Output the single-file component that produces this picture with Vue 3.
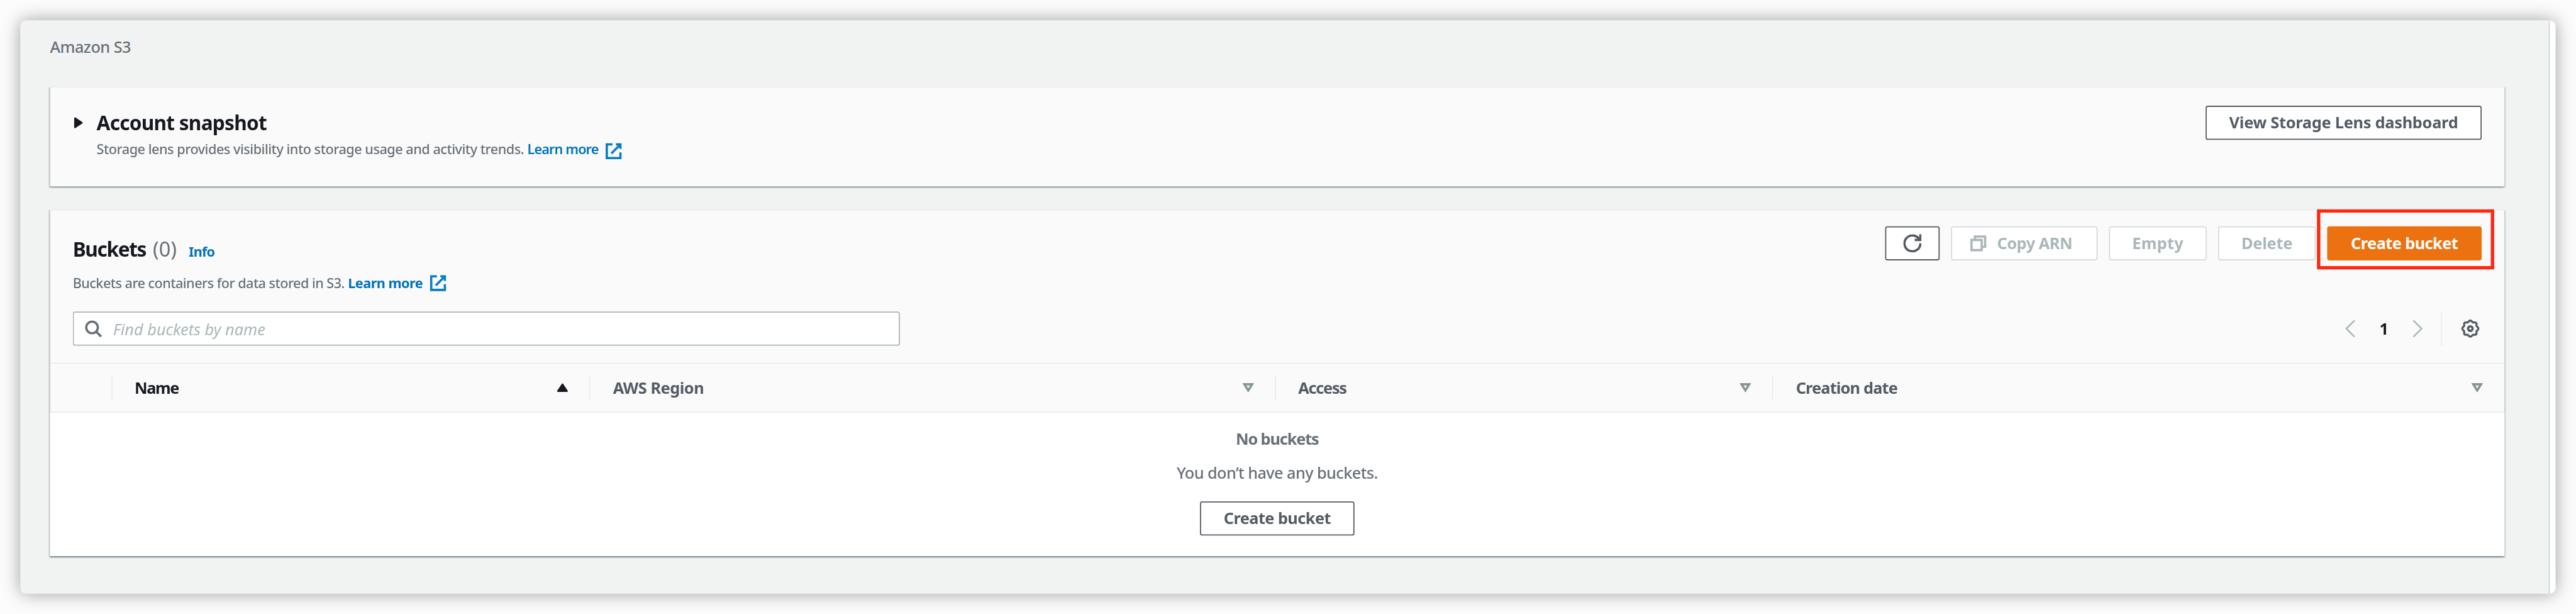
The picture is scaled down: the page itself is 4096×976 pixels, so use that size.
<script setup>
const columns = [
  { key: 'name', label: 'Name', sorted: true },
  { key: 'region', label: 'AWS Region', sorted: false },
  { key: 'access', label: 'Access', sorted: false },
  { key: 'created', label: 'Creation date', sorted: false },
]

// Eight-lobed outline of the settings gear
const gearPoints = Array.from({ length: 96 }, (_, i) => {
  const a = (i / 96) * Math.PI * 2
  const r = 6.55 + 0.6 * Math.cos(8 * a)
  return `${(8 + r * Math.cos(a)).toFixed(2)},${(8 + r * Math.sin(a)).toFixed(2)}`
}).join(' ')
</script>

<template>
  <div class="viewport">
    <div class="canvas">
      <div class="window">
        <main class="page">
          <nav class="crumbs">Amazon S3</nav>

          <section class="card snapshot">
            <svg class="caret" viewBox="0 0 16 20"><path d="M2 2v16L14 10z" /></svg>
            <div class="snapshot-text">
              <h2 class="title account">Account snapshot</h2>
              <p class="desc lens">
                <span>Storage lens provides visibility into storage usage and activity trends.</span>
                <a class="link light">Learn more</a>
                <svg class="icon ext" viewBox="0 0 16 16"><path d="M10 2h4v4M6 10l8-8M14 9v5H2V2h5" /></svg>
              </p>
            </div>
            <button class="btn dashboard">View Storage Lens dashboard</button>
          </section>

          <section class="card buckets">
            <header class="head">
              <div class="head-text">
                <div class="title-row">
                  <h2 class="title buckets-title">Buckets</h2>
                  <span class="count">(0)</span>
                  <a class="info">Info</a>
                </div>
                <p class="desc stored">
                  <span>Buckets are containers for data stored in S3.</span>
                  <a class="link">Learn more</a>
                  <svg class="icon ext" viewBox="0 0 16 16"><path d="M10 2h4v4M6 10l8-8M14 9v5H2V2h5" /></svg>
                </p>
              </div>
              <div class="actions">
                <button class="btn refresh">
                  <svg class="icon" viewBox="0 0 16 16"><path d="M10 5h5V0M15 8a7 7 0 1 1-.7-3" /></svg>
                </button>
                <button class="btn off copy">
                  <svg class="icon" viewBox="0 0 16 16"><path d="M2 5h9v9H2zM5 5V2h9v9h-3" /></svg>
                  <span>Copy ARN</span>
                </button>
                <button class="btn off empty-btn">Empty</button>
                <button class="btn off delete">Delete</button>
                <div class="marked">
                  <button class="btn primary create">Create bucket</button>
                </div>
              </div>
            </header>

            <div class="toolbar">
              <div class="search">
                <svg class="icon" viewBox="0 0 16 16"><circle cx="7" cy="7" r="5.1" /><path d="M10.8 10.8l4.2 4.2" /></svg>
                <span>Find buckets by name</span>
              </div>
              <div class="pager">
                <svg class="icon arrow" viewBox="0 0 16 16"><path d="M11.6.8L4.4 8l7.2 7.2" /></svg>
                <b>1</b>
                <svg class="icon arrow" viewBox="0 0 16 16"><path d="M4.4.8L11.6 8l-7.2 7.2" /></svg>
              </div>
              <div class="prefs">
                <svg class="icon" viewBox="0 0 16 16">
                  <polygon :points="gearPoints" />
                  <circle cx="8" cy="8" r="2" />
                </svg>
              </div>
            </div>

            <div class="columns">
              <div class="col"></div>
              <div v-for="c in columns" :key="c.key" class="col" :class="[c.key, { sorted: c.sorted }]">
                <span>{{ c.label }}</span>
                <svg v-if="c.sorted" class="tri up" viewBox="0 0 20 16"><path d="M10 2L18 14H2z" /></svg>
                <svg v-else class="tri down" viewBox="0 0 20 16"><path d="M3.2 2h13.6L10 12.8z" /></svg>
              </div>
            </div>

            <div class="none">
              <b>No buckets</b>
              <p>You don’t have any buckets.</p>
              <button class="btn create">Create bucket</button>
            </div>
          </section>
        </main>
      </div>
    </div>
  </div>
</template>

<style>
body {
  background: #fcfcfc;
}
</style>

<style scoped>
* {
  box-sizing: border-box;
  margin: 0;
}
.viewport {
  width: 4096px;
  height: 976px;
  overflow: hidden;
}
.canvas {
  width: 4534px;
  height: 1080px;
  padding: 36px;
  transform: scale(0.9034, 0.9037);
  transform-origin: 0 0;
  font: 28px/44px 'Noto Sans', 'Open Sans', sans-serif;
  color: #545b64;
}
.window {
  height: 1008px;
  padding-right: 10px;
  border-radius: 10px;
  overflow: hidden;
  background: #fff;
  box-shadow: 0 0 32px rgba(0, 0, 0, 0.37);
}
.page {
  width: 4452px;
  height: 100%;
  padding: 24px 78px 0 52px;
  border-right: 2px solid #d2d8d8;
  background: #f1f3f3;
}
.crumbs {
  height: 92px;
  font-weight: 500;
  letter-spacing: -0.6px;
  color: #687078;
}
.card {
  border-top: 2px solid #eaeded;
  background: #fafafa;
  box-shadow:
    0 2px 2px 0 rgba(0, 28, 36, 0.3),
    2px 2px 2px 0 rgba(0, 28, 36, 0.15),
    -2px 2px 2px 0 rgba(0, 28, 36, 0.15);
}
.snapshot {
  display: flex;
  height: 176px;
  padding: 32px 40px 0 42px;
}
.caret {
  width: 16px;
  height: 20px;
  margin-top: 20px;
  fill: #16191f;
  stroke: #16191f;
  stroke-width: 3;
  stroke-linejoin: round;
}
.snapshot-text {
  flex: 1;
  padding: 8px 0 0 24px;
}
.title {
  font-size: 35px;
  font-weight: 700;
  line-height: 44px;
  color: #16191f;
}
.account {
  letter-spacing: -0.85px;
}
.desc {
  display: flex;
  align-items: center;
  font-size: 24px;
  font-weight: 500;
  line-height: 32px;
  color: #687078;
  white-space: nowrap;
}
.lens {
  margin-top: 8px;
  letter-spacing: -0.56px;
}
.desc.stored {
  margin-top: 22px;
  letter-spacing: -0.63px;
}
.link {
  margin-left: 6px;
  font-weight: 700;
  letter-spacing: -0.6px;
  color: #0073bb;
}
.light {
  font-weight: 600;
  letter-spacing: -1px;
}
.icon {
  flex: none;
  width: 32px;
  height: 32px;
  fill: none;
  stroke: currentColor;
  stroke-width: 2;
}
.ext {
  margin-left: 11px;
  color: #0a7cc4;
}
.lens .ext {
  margin-top: 4px;
  margin-bottom: -4px;
}
.btn {
  display: flex;
  align-items: center;
  justify-content: center;
  height: 60px;
  padding: 0 0 2px;
  border: 2px solid #545b64;
  border-radius: 4px;
  background: #fff;
  font: 700 28px/40px 'Noto Sans', 'Open Sans', sans-serif;
  color: #545b64;
  white-space: nowrap;
}
.dashboard {
  width: 486px;
  letter-spacing: -0.26px;
}
.buckets {
  height: 610px;
  margin-top: 40px;
}
.head {
  display: flex;
  justify-content: space-between;
  height: 178px;
  padding: 28px 40px 0;
}
.head-text {
  padding-top: 18px;
}
.title-row {
  display: flex;
  align-items: baseline;
  height: 44px;
}
.buckets-title {
  letter-spacing: -1.5px;
}
.count {
  margin-left: 12px;
  font-size: 36px;
  line-height: 44px;
  color: #687078;
}
.info {
  margin-left: 21px;
  font-size: 24px;
  font-weight: 700;
  letter-spacing: -0.9px;
  color: #0073bb;
}
.actions {
  display: flex;
  gap: 20px;
}
.refresh {
  width: 96px;
  padding: 0;
}
.off {
  border-color: #d5dbdb;
  color: #aab7b8;
}
.copy {
  justify-content: flex-start;
  width: 258px;
  gap: 17px;
  padding-left: 30px;
  letter-spacing: -0.5px;
}
.copy .icon {
  margin-top: 2px;
}
.empty-btn {
  width: 172px;
  letter-spacing: 0.3px;
}
.delete {
  width: 172px;
  letter-spacing: -0.2px;
}
.create {
  width: 272px;
  letter-spacing: -0.6px;
}
.primary {
  border-color: #ec7211;
  background: #ec7211;
  color: #fff;
}
.marked {
  position: relative;
  height: 60px;
}
.marked::after {
  content: '';
  position: absolute;
  inset: -30px -22px -16px -18px;
  border: 6px solid #ff2710;
}
.toolbar {
  display: flex;
  align-items: center;
  height: 90px;
  padding: 0 40px 30px;
}
.search {
  display: flex;
  align-items: center;
  gap: 19px;
  width: 1456px;
  height: 60px;
  padding-left: 18px;
  border: 2px solid #aab7b8;
  border-radius: 4px;
  background: #fff;
  font-style: italic;
  color: #aab7b8;
}
.search .icon {
  color: #687078;
}
.search span {
  padding-top: 1px;
}
.pager {
  display: flex;
  align-items: center;
  margin-left: auto;
}
.pager b {
  width: 86px;
  text-align: center;
  color: #16191f;
}
.arrow {
  color: #aab7b8;
  stroke-width: 1.4;
}
.prefs {
  display: flex;
  align-items: center;
  height: 60px;
  margin-left: 25px;
  padding: 0 4px 0 34px;
  border-left: 2px solid #eaeded;
}
.prefs .icon {
  stroke-width: 1.8;
}
.prefs circle {
  stroke-width: 2;
}
.columns {
  display: grid;
  grid-template-columns: 110px 841px 1207px 875px 1fr;
  align-items: center;
  height: 88px;
  border-top: 2px solid #eaeded;
  border-bottom: 2px solid #eaeded;
  font-weight: 700;
}
.col {
  display: flex;
  align-items: center;
  justify-content: space-between;
  height: 42px;
  padding: 0 37px 0 39px;
  border-right: 2px solid #eaeded;
}
.col:last-child {
  padding-right: 38px;
  border-right: 0;
}
.name {
  letter-spacing: -1.6px;
}
.region {
  padding-left: 40px;
  letter-spacing: -0.5px;
}
.access {
  padding-left: 39px;
  letter-spacing: -1.4px;
}
.created {
  padding-left: 40px;
  letter-spacing: -0.9px;
}
.sorted {
  color: #16191f;
}
.tri {
  width: 20px;
  height: 16px;
  stroke-linejoin: round;
}
.up {
  fill: #16191f;
  stroke: #16191f;
  stroke-width: 3;
}
.down {
  fill: none;
  stroke: #879596;
  stroke-width: 4;
  stroke-linejoin: miter;
}
.none {
  display: flex;
  flex-direction: column;
  align-items: center;
  height: 252px;
  padding: 23px 0 0;
  background: #fff;
  color: #687078;
}
.none b {
  letter-spacing: -1.25px;
}
.none p {
  margin: 16px 0 29px;
  font-weight: 500;
  letter-spacing: -0.65px;
}
</style>
